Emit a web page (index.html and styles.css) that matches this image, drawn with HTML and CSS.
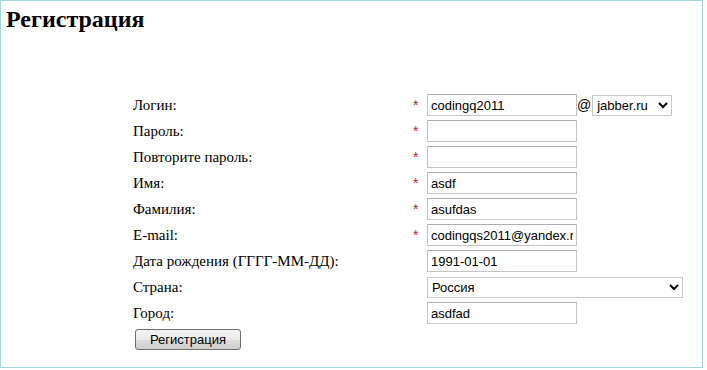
FILE: index.html
```html
<!DOCTYPE html>
<html lang="ru">
<head>
    <meta charset="UTF-8">
    <title>Регистрация</title>
    <link rel="stylesheet" href="styles.css">
</head>
<body>
    <div class="page">
        <h1>Регистрация</h1>

        <form class="reg-form">
            <div class="row">
                <label class="label">Логин:</label>
                <span class="req">*</span>
                <div class="field">
                    <input class="text" type="text" value="codingq2011">
                    <span class="at">@</span>
                    <select class="domain"><option>jabber.ru</option></select>
                </div>
            </div>
            <div class="row">
                <label class="label">Пароль:</label>
                <span class="req">*</span>
                <div class="field"><input class="text" type="password"></div>
            </div>
            <div class="row">
                <label class="label">Повторите пароль:</label>
                <span class="req">*</span>
                <div class="field"><input class="text" type="password"></div>
            </div>
            <div class="row">
                <label class="label">Имя:</label>
                <span class="req">*</span>
                <div class="field"><input class="text" type="text" value="asdf"></div>
            </div>
            <div class="row">
                <label class="label">Фамилия:</label>
                <span class="req">*</span>
                <div class="field"><input class="text" type="text" value="asufdas"></div>
            </div>
            <div class="row">
                <label class="label">E-mail:</label>
                <span class="req">*</span>
                <div class="field"><input class="text" type="text" value="codingqs2011@yandex.ru"></div>
            </div>
            <div class="row">
                <label class="label">Дата рождения (ГГГГ-ММ-ДД):</label>
                <span class="req"></span>
                <div class="field"><input class="text" type="text" value="1991-01-01"></div>
            </div>
            <div class="row">
                <label class="label">Страна:</label>
                <span class="req"></span>
                <div class="field"><select class="country"><option>Россия</option></select></div>
            </div>
            <div class="row">
                <label class="label">Город:</label>
                <span class="req"></span>
                <div class="field"><input class="text" type="text" value="asdfad"></div>
            </div>
            <div class="row">
                <button class="submit" type="button">Регистрация</button>
            </div>
        </form>
    </div>
</body>
</html>
```

FILE: styles.css
```css
* {
    margin: 0;
    padding: 0;
    box-sizing: border-box;
}

body {
    font-family: 'Liberation Serif', 'Times New Roman', serif;
    font-size: 15px;
    color: #000;
    background: #fff;
}

.page {
    width: 703px;
    height: 368px;
    border: 1px solid #a6d6e0;
    padding: 5px 0 0 5px;
}

h1 {
    font-size: 24px;
    font-weight: bold;
    line-height: 27px;
}

.reg-form {
    margin: 59px 0 0 127px;
}

.row {
    display: flex;
    align-items: center;
    height: 26px;
}

.label {
    width: 279px;
}

.req {
    width: 15px;
    color: #c81e1e;
    font-family: 'Liberation Sans', Arial, sans-serif;
    font-size: 14px;
    padding-left: 1px;
}

.field {
    display: flex;
    align-items: center;
}

.text {
    width: 150px;
    height: 22px;
    border: 1px solid #c4c4c4;
    border-top-color: #abadb3;
    padding: 0 3px;
    font-family: 'Liberation Sans', Arial, sans-serif;
    font-size: 13px;
    color: #000;
    background: #fff;
}

.at {
    font-family: 'Liberation Sans', Arial, sans-serif;
    font-size: 14px;
    margin: 0 1px 0 0;
}

select {
    height: 21px;
    border: 1px solid #c8c8c8;
    background: #fff;
    font-family: 'Liberation Sans', Arial, sans-serif;
    font-size: 13px;
    color: #000;
}

.domain {
    width: 80px;
}

.country {
    width: 256px;
}

.submit {
    margin: 0 0 0 2px;
    width: 106px;
    height: 21px;
    border: 1px solid #707070;
    border-radius: 3px;
    background: linear-gradient(#f2f2f2, #ebebeb 50%, #dddddd 51%, #cfcfcf);
    font-family: 'Liberation Sans', Arial, sans-serif;
    font-size: 13px;
    color: #000;
}
```
